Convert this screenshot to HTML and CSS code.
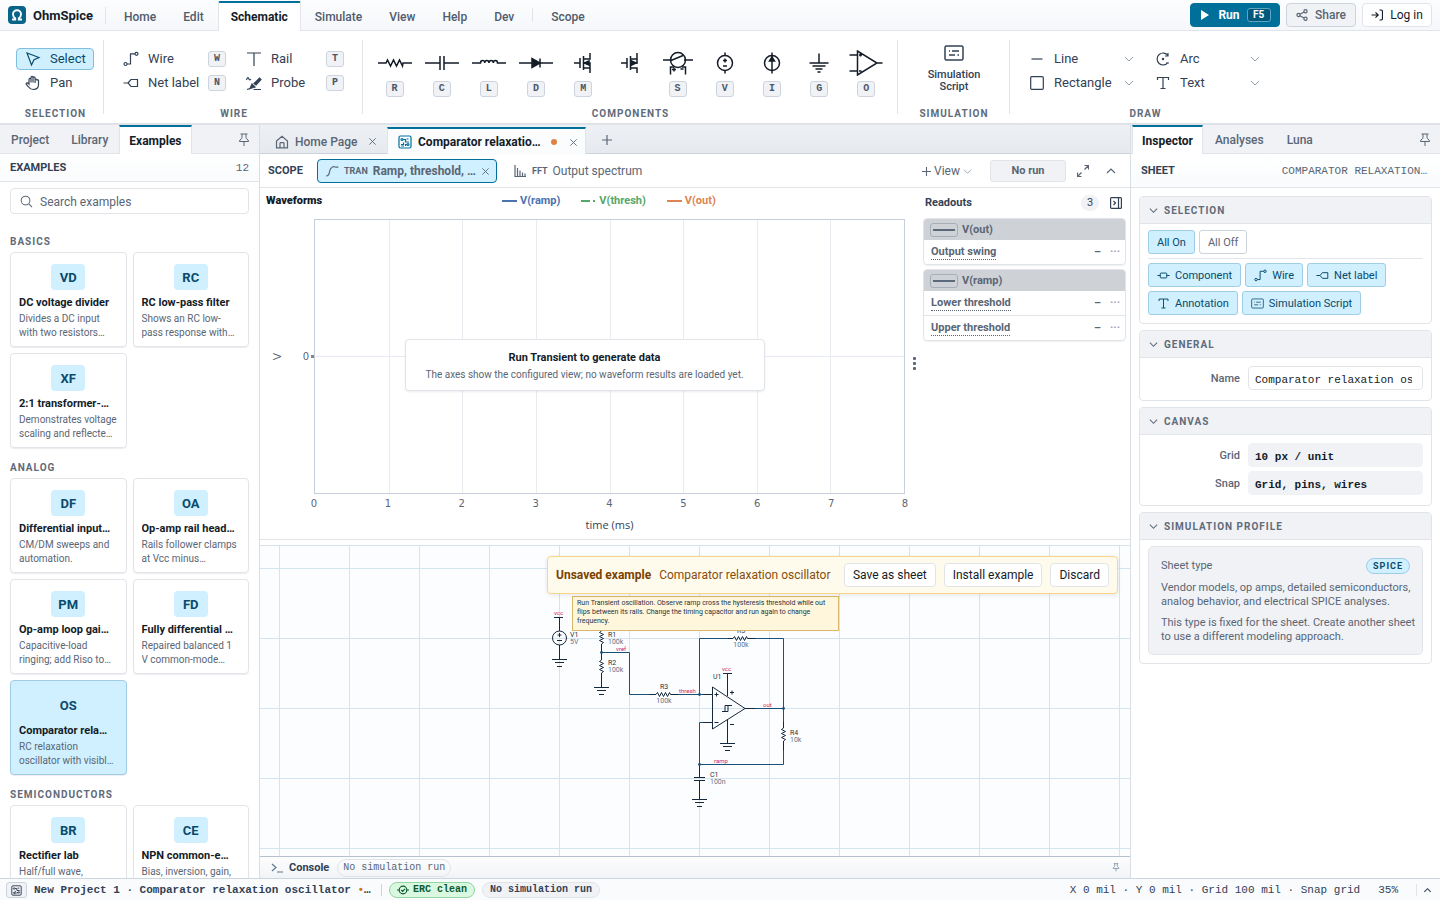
FILE: index.html
```html
<!DOCTYPE html>
<html lang="en">
<head>
<meta charset="utf-8">
<title>OhmSpice</title>
<link rel="stylesheet" href="styles.css">
</head>
<body>
<svg class="defs" aria-hidden="true">
  <symbol id="chev" viewBox="0 0 10 10"><path d="M1 3l4 4 4-4"/></symbol>
  <symbol id="close" viewBox="0 0 10 10"><path d="M1.500 1.500l7 7M8.500 1.500l-7 7"/></symbol>
  <symbol id="pin" viewBox="0 0 12 14"><path d="M2.500 1h7M4 1v3.500q0 1-1 1.500-1.500.8-1.500 2.500h9Q10.500 6.800 9 6 8 5.500 8 4.500V1M6 8.500V13"/></symbol>
  <symbol id="wire" viewBox="0 0 16 16"><circle cx="2.500" cy="13" r="1.500"/><circle cx="13.500" cy="2.800" r="1.500"/><path d="M4 13h3.500V2.800H12"/></symbol>
  <symbol id="netlabel" viewBox="0 0 16 16"><path d="M0.500 8H5M5 8l3-3.500h6.500v7H8z"/></symbol>
  <symbol id="serif-t" viewBox="0 0 16 16"><path d="M2.500 5V2.500h11V5M8 2.500v11M5.500 13.500h5"/></symbol>
  <symbol id="script" viewBox="0 0 20 16"><rect x="1" y="1" width="18" height="14" rx="1.500"/><path d="M5 6h1M8 6h7M5 10h6M13.500 10h1.500"/></symbol>
  <symbol id="sheet" viewBox="0 0 14 14"><rect x="1" y="1" width="12" height="12" rx="1.500"/><circle cx="4" cy="4.500" r="1"/><circle cx="10" cy="9.500" r="1"/><path d="M5 4.500h2.500V7H11M3 9.500h2.500V7.500M8.500 4h2M3 11h3M9 9.500H7.500V11"/></symbol>
</svg>

<header class="topbar">
  <svg class="logo" viewBox="0 0 18 18"><rect width="18" height="18" rx="4" fill="#086489"/><path d="M4 13.500h3.200v-1.200C5.600 11.300 5 9.800 5 8.200 5 5.900 6.700 4.300 9 4.300s4 1.600 4 3.900c0 1.600-.6 3.100-2.200 4.100v1.200H14" fill="none" stroke="#fff" stroke-width="1.900"/></svg>
  <strong class="brand">OhmSpice</strong>
  <nav class="menu">
    <button>Home</button><button>Edit</button><button class="on">Schematic</button><button>Simulate</button><button>View</button><button>Help</button><button>Dev</button><i class="vsep"></i><button>Scope</button>
  </nav>
  <div class="actions">
    <button class="btn run"><svg viewBox="0 0 10 12"><path d="M1 1l8 5-8 5z" fill="currentColor"/></svg>Run<kbd>F5</kbd></button>
    <button class="btn share"><svg viewBox="0 0 12 12"><circle cx="9.500" cy="2.300" r="1.600"/><circle cx="2.500" cy="6" r="1.600"/><circle cx="9.500" cy="9.700" r="1.600"/><path d="M4 5.200L8 3M4 6.800L8 9"/></svg>Share</button>
    <button class="btn login"><svg viewBox="0 0 12 12"><path d="M0.500 6H7M4.500 3.300L7.200 6 4.500 8.700M8.500 1h1.500q1.500 0 1.500 1.500v7q0 1.500-1.500 1.500H8.500"/></svg>Log in</button>
  </div>
</header>

<section class="ribbon">
  <div class="group g-select">
    <div class="tools one">
      <button class="tool on"><svg class="i16" viewBox="0 0 16 16"><path d="M2 2l12 4.500-5 2.200L6.500 14z"/></svg>Select</button>
      <button class="tool"><svg class="i16" viewBox="0 0 16 16"><path d="M4 9V4.500q0-1.200 1-1.200t1 1.200V7.500 2.500q0-1.200 1-1.200t1 1.200v5V3q0-1.200 1-1.200t1.100 1.200v5V5q0-1 1-1t1 1v0q.9-.5 1.400.5V9.500q0 5-5.300 5-3 0-4.500-2.500L1.300 9.500q-.5-1.200.7-1.600Q3 7.800 4 9z"/></svg>Pan</button>
    </div>
    <h2>Selection</h2>
  </div>
  <div class="group g-wire">
    <div class="tools two">
      <button class="tool"><svg class="i16"><use href="#wire"/></svg>Wire<kbd>W</kbd></button>
      <button class="tool"><svg class="i16" viewBox="0 0 16 16"><path d="M1 2h14M8 2v13"/></svg>Rail<kbd>T</kbd></button>
      <button class="tool"><svg class="i16"><use href="#netlabel"/></svg>Net label<kbd>N</kbd></button>
      <button class="tool"><svg class="i16" viewBox="0 0 16 16"><path d="M.5 5q1.200-4 2.200-1.500T5 4M1 14.500l3-1M7.500 14.500H15"/><path d="M4 13.500l2-4.500 3 3zM8 8.500L13.500 3l1.500 1.500-5 5.500z" fill="currentColor"/></svg>Probe<kbd>P</kbd></button>
    </div>
    <h2>Wire</h2>
  </div>
  <div class="group g-comp">
    <div class="parts">
      <button class="part" aria-label="Resistor"><svg viewBox="0 0 34 26"><path d="M0 13h8l1.500-3 3 6 3-6 3 6 3-6 3 6L25 13h9"/></svg><kbd>R</kbd></button>
      <button class="part" aria-label="Capacitor"><svg viewBox="0 0 34 26"><path d="M0 13h15M19 13h15M15 6v14M19 6v14"/></svg><kbd>C</kbd></button>
      <button class="part" aria-label="Inductor"><svg viewBox="0 0 34 26"><path d="M0 13h8.500q0-2.500 2.100-2.500T12.700 13q0-2.500 2.150-2.500T17 13q0-2.500 2.150-2.500T21.300 13q0-2.500 2.100-2.500T25.500 13H34"/></svg><kbd>L</kbd></button>
      <button class="part" aria-label="Diode"><svg viewBox="0 0 34 26"><path d="M0 13h34M21 8.500v9"/><path d="M13 8.500v9l8-4.500z" fill="currentColor"/></svg><kbd>D</kbd></button>
      <button class="part" aria-label="NMOS"><svg viewBox="0 0 34 26"><path d="M8 13h6M14 8v10M17.500 6v14M17.500 9H24V3M17.500 13H24v10M17.500 18H24"/><path d="M18.500 13l4.500-2v4z" fill="currentColor"/></svg><kbd>M</kbd></button>
      <button class="part" aria-label="PMOS"><svg viewBox="0 0 34 26"><path d="M8 13h6M14 8v10M17.500 6v14M17.500 9H24M24 3v10h-6.500M17.500 18H24v5"/><path d="M23 13l-4.500-2v4z" fill="currentColor"/></svg></button>
      <button class="part" aria-label="Switch"><svg viewBox="0 0 34 26"><circle cx="17" cy="10" r="7.500"/><path d="M2 10h9M23 10h9M10 10.500l12-5M9.500 24.500V17h3.500M24.500 24.500V17H21M13 17.500v4M11 19.500h4M19.500 19h3"/></svg><kbd>S</kbd></button>
      <button class="part" aria-label="Voltage source"><svg viewBox="0 0 34 26"><circle cx="17" cy="13" r="7.500"/><path d="M17 2.500v3M17 20.500v3M17 8.500v4M15 10.500h4M15 16h4"/></svg><kbd>V</kbd></button>
      <button class="part" aria-label="Current source"><svg viewBox="0 0 34 26"><circle cx="17" cy="13" r="7.500"/><path d="M17 2.500v21"/><path d="M14.500 11L17 7l2.500 4z" fill="currentColor"/></svg><kbd>I</kbd></button>
      <button class="part" aria-label="Ground"><svg viewBox="0 0 34 26"><path d="M17 3.500V13M7.500 13h19M10.500 16h13M13.500 19h7M15.500 22h3"/></svg><kbd>G</kbd></button>
      <button class="part" aria-label="Op amp"><svg viewBox="0 0 34 26"><path d="M8.500 1v24L28 13zM0.500 5h8M0.500 21h8M28 13h5.500M10 5h3M11.500 3.500v3M10 21h2.500"/></svg><kbd>O</kbd></button>
    </div>
    <h2>Components</h2>
  </div>
  <div class="group g-sim">
    <button class="big"><svg viewBox="0 0 20 16"><use href="#script"/></svg>Simulation<br>Script</button>
    <h2>Simulation</h2>
  </div>
  <div class="group g-draw">
    <div class="tools two">
      <button class="tool"><svg class="i16" viewBox="0 0 16 16"><path d="M2.500 8h11"/></svg>Line<svg class="dd"><use href="#chev"/></svg></button>
      <button class="tool"><svg class="i16" viewBox="0 0 16 16"><path d="M13 4.500A6 6 0 1 0 13 11.500M13 2v3h-3M11 12h3"/><circle cx="8" cy="8" r=".6"/></svg>Arc<svg class="dd"><use href="#chev"/></svg></button>
      <button class="tool"><svg class="i16" viewBox="0 0 16 16"><rect x="1.700" y="1.700" width="12.600" height="12.600" rx="1"/></svg>Rectangle<svg class="dd"><use href="#chev"/></svg></button>
      <button class="tool"><svg class="i16"><use href="#serif-t"/></svg>Text<svg class="dd"><use href="#chev"/></svg></button>
    </div>
    <h2>Draw</h2>
  </div>
</section>

<main class="work">
  <aside class="left">
    <div class="ptabs"><button>Project</button><button>Library</button><button class="on">Examples</button><svg class="pin"><use href="#pin"/></svg></div>
    <div class="phead short"><h1>EXAMPLES</h1><span>12</span></div>
    <div class="scroll">
      <label class="search"><svg viewBox="0 0 14 14"><circle cx="6" cy="6" r="4.700"/><path d="M9.500 9.500L13 13"/></svg><input type="text" placeholder="Search examples" aria-label="Search examples"></label>
      <h3>BASICS</h3>
      <div class="cards">
        <button class="card"><b>VD</b><strong>DC voltage divider</strong><span>Divides a DC input<br>with two resistors…</span></button>
        <button class="card"><b>RC</b><strong>RC low-pass filter</strong><span>Shows an RC low-<br>pass response with…</span></button>
        <button class="card"><b>XF</b><strong>2:1 transformer-…</strong><span>Demonstrates voltage<br>scaling and reflecte…</span></button>
      </div>
      <h3>ANALOG</h3>
      <div class="cards">
        <button class="card"><b>DF</b><strong>Differential input…</strong><span>CM/DM sweeps and<br>automation.</span></button>
        <button class="card"><b>OA</b><strong>Op-amp rail head…</strong><span>Rails follower clamps<br>at Vcc minus…</span></button>
        <button class="card"><b>PM</b><strong>Op-amp loop gai…</strong><span>Capacitive-load<br>ringing; add Riso to…</span></button>
        <button class="card"><b>FD</b><strong>Fully differential …</strong><span>Repaired balanced 1<br>V common-mode…</span></button>
        <button class="card on"><b>OS</b><strong>Comparator rela…</strong><span>RC relaxation<br>oscillator with visibl…</span></button>
      </div>
      <h3>SEMICONDUCTORS</h3>
      <div class="cards">
        <button class="card"><b>BR</b><strong>Rectifier lab</strong><span>Half/full wave,</span></button>
        <button class="card"><b>CE</b><strong>NPN common-e…</strong><span>Bias, inversion, gain,</span></button>
      </div>
    </div>
  </aside>

  <section class="center">
    <div class="doctabs">
      <button class="doc"><svg class="i14" viewBox="0 0 14 14"><path d="M1.500 6L7 1.200 12.500 6v6.800h-11zM5 12.800V8.500q0-.8.800-.8h2.400q.8 0 .8.800v4.300"/></svg><span>Home Page</span><svg class="x"><use href="#close"/></svg></button>
      <button class="doc on"><svg class="i14 accent"><use href="#sheet"/></svg><span>Comparator relaxatio…</span><i class="dot"></i><svg class="x"><use href="#close"/></svg></button>
      <button class="plus" aria-label="New tab"><svg viewBox="0 0 10 10"><path d="M5 0v10M0 5h10"/></svg></button>
    </div>
    <div class="scopebar">
      <h1>SCOPE</h1>
      <button class="view on"><svg class="i14" viewBox="0 0 14 14"><path d="M1 12q3 0 3.500-4T8.500 2.500q1.500 1 5 .5"/></svg><small>TRAN</small>Ramp, threshold, …<svg class="x"><use href="#close"/></svg></button>
      <button class="view"><svg class="i14" viewBox="0 0 14 14"><path d="M2 1v11.500h11M4.500 4v8M7 6.500V12M9.500 8.500V12M12 9.500V12"/></svg><small>FFT</small>Output spectrum</button>
      <button class="addview"><svg viewBox="0 0 10 10"><path d="M5 0v10M0 5h10"/></svg>View<svg class="dd"><use href="#chev"/></svg></button>
      <button class="norun">No run</button>
      <button class="ico" aria-label="Expand"><svg viewBox="0 0 12 12"><path d="M7.500 4.500l4-4M7.500.5h4v4M4.500 7.500l-4 4M.5 7.500v4h4"/></svg></button>
      <button class="ico" aria-label="Collapse"><svg viewBox="0 0 12 12"><path d="M2 8l4-4 4 4"/></svg></button>
    </div>
    <div class="scope">
      <div class="chart">
        <div class="legend"><strong>Waveforms</strong><div><span class="c1"><i></i>V(ramp)</span><span class="c2"><i></i>V(thresh)</span><span class="c3"><i></i>V(out)</span></div></div>
        <div class="plotrow">
          <div class="yname"><span>V</span></div><div class="ytick">0<i></i></div>
          <div class="plot">
            <i></i><i></i><i></i><i></i><i></i><i></i><i></i><i></i>
            <div class="empty"><strong>Run Transient to generate data</strong><span>The axes show the configured view; no waveform results are loaded yet.</span></div>
          </div>
        </div>
        <div class="xticks"><span>0</span><span>1</span><span>2</span><span>3</span><span>4</span><span>5</span><span>6</span><span>7</span><span>8</span></div>
        <div class="xname">time (ms)</div>
      </div>
      <div class="grip"><i></i><i></i><i></i></div>
      <div class="readouts">
        <div class="rhead"><h2>Readouts</h2><span>3</span><svg viewBox="0 0 12 12"><rect x=".6" y=".6" width="10.800" height="10.800" rx="1"/><path d="M8.500 1v10M3.500 4l2 2-2 2"/></svg></div>
        <div class="rcard"><h3><i></i>V(out)</h3><div class="row"><a href="#">Output swing</a><b>–</b><em>···</em></div></div>
        <div class="rcard"><h3><i></i>V(ramp)</h3><div class="row"><a href="#">Lower threshold</a><b>–</b><em>···</em></div><div class="row"><a href="#">Upper threshold</a><b>–</b><em>···</em></div></div>
      </div>
    </div>
    <div class="canvas">
      <svg class="schem">
        <defs><pattern id="grid" width="70" height="70" patternUnits="userSpaceOnUse" x="19" y="22"><path d="M0 .5h70M.5 0v70" stroke="#d3e5f0" stroke-width="1" fill="none"/></pattern></defs>
        <rect width="100%" height="100%" fill="url(#grid)" stroke="none"/>
        <g transform="translate(-260 -546)">
          <g class="net">
            <path d="M601.500 652.500H629.500V694.500H652M676 694.500H712M699.500 694.500V638.500H730M752 638.500H783.500V727M745 708.500H783.500M783.500 744V764.500H699.500V722.500H712"/>
          </g>
          <g class="dev">
            <path d="M554 617.500h9M559.500 617.500V631"/><circle cx="559.500" cy="638" r="7"/><path d="M559.500 633v4M557.500 635h4M557 640.500h5M559.500 645v7"/>
            <path d="M601.500 625v6l-2 1.500 4 2-4 2 4 2-4 2 4 2-2 1.500V660l-2 1.500 4 2-4 2 4 2-4 2 4 2-2 1.500v7"/>
            <path d="M650 694.500h6l1.500-2 2 4 2-4 2 4 2-4 2 4 2-4 1 2h8"/>
            <path d="M728 638.500h5l1.500-2 2 4 2-4 2 4 2-4 2 4 2-4 1 2h8"/>
            <path d="M783.500 722v6l-2 1.500 4 2-4 2 4 2-4 2 4 2-2 1.500V750"/>
            <path d="M712.500 687v42L745 708.500zM703 694.500h9M703 722.500h9M745 708.500h10M714.500 694.500h4M716.500 692.500v4M714.500 722.500h4M723 673.500h9M727.500 673.500V696M727.500 719v17M730 692.500h4M732 690.500v4M730 724.500h4M722 711.500h6v-6h4M725 711.500v-6h4"/>
            <path d="M699.500 764v13M694 777.500h11M694 780.500h11M699.500 780v13"/>
          </g>
          <g class="dev"><path d="M552 659.500h15M555 662.500h9M557 666.500h5M559.500 650v10M594 687.500h15M597 690.500h9M599 694.500h5M601.500 679v9M720 743.500h15M723 746.500h9M725 750.500h5M727.500 735v9M692 799.500h15M695 802.500h9M697 806.500h5M699.500 793v7"/></g>
          <g class="node"><circle cx="601.500" cy="652.500" r="1.400"/><circle cx="699.500" cy="694.500" r="1.400"/><circle cx="783.500" cy="708.500" r="1.400"/><circle cx="699.500" cy="764.500" r="1.400"/></g>
          <g class="lab">
            <text x="570" y="637">V1</text><text x="608" y="637">R1</text><text x="608" y="665">R2</text><text x="664" y="689" text-anchor="middle">R3</text><text x="741" y="633" text-anchor="middle">R5</text><text x="713" y="679">U1</text><text x="790" y="735">R4</text><text x="710" y="777">C1</text>
          </g>
          <g class="val">
            <text x="570" y="644">5V</text><text x="608" y="644">100k</text><text x="608" y="672">100k</text><text x="664" y="703" text-anchor="middle">100k</text><text x="741" y="647" text-anchor="middle">100k</text><text x="790" y="742">10k</text><text x="710" y="784">100n</text>
          </g>
          <g class="netname"><text x="554" y="615">vcc</text><text x="616" y="651">vref</text><text x="679" y="693">thresh</text><text x="722" y="671">vcc</text><text x="763" y="707">out</text><text x="714" y="763">ramp</text></g>
          <rect x="572.500" y="596.500" width="266" height="34" fill="#fff6dc" stroke="#d9b968"/>
          <g class="note"><text x="577" y="605">Run Transient oscillation. Observe ramp cross the hysteresis threshold while out</text><text x="577" y="614">flips between its rails. Change the timing capacitor and run again to change</text><text x="577" y="623">frequency.</text></g>
        </g>
      </svg>
      <div class="banner"><strong>Unsaved example</strong><span>Comparator relaxation oscillator</span><button>Save as sheet</button><button>Install example</button><button>Discard</button></div>
    </div>
    <div class="console"><svg viewBox="0 0 12 10"><path d="M1 1l4 3.500L1 8M6 9h6"/></svg><strong>Console</strong><span class="pill">No simulation run</span><svg class="pin sm"><use href="#pin"/></svg></div>
  </section>

  <aside class="right">
    <div class="ptabs"><button class="on">Inspector</button><button>Analyses</button><button>Luna</button><svg class="pin"><use href="#pin"/></svg></div>
    <div class="phead"><h1>SHEET</h1><span class="mono">COMPARATOR RELAXATION…</span></div>
    <div class="props">
      <section class="box"><h2><svg><use href="#chev"/></svg>SELECTION</h2>
        <div class="body sel">
          <div class="chips top"><button class="chip">All On</button><button class="chip off">All Off</button></div>
          <div class="chips">
            <button class="chip"><svg viewBox="0 0 16 16"><rect x="4" y="5" width="8" height="6" rx="1"/><path d="M.5 8H4M12 8h3.500"/></svg>Component</button>
            <button class="chip"><svg><use href="#wire"/></svg>Wire</button>
            <button class="chip"><svg><use href="#netlabel"/></svg>Net label</button>
            <button class="chip"><svg><use href="#serif-t"/></svg>Annotation</button>
            <button class="chip"><svg><use href="#script"/></svg>Simulation Script</button>
          </div>
        </div>
      </section>
      <section class="box"><h2><svg><use href="#chev"/></svg>GENERAL</h2>
        <div class="body"><div class="field"><label for="name">Name</label><input id="name" type="text" value="Comparator relaxation oscillator"></div></div>
      </section>
      <section class="box"><h2><svg><use href="#chev"/></svg>CANVAS</h2>
        <div class="body"><div class="field"><span>Grid</span><output>10 px / unit</output></div><div class="field"><span>Snap</span><output>Grid, pins, wires</output></div></div>
      </section>
      <section class="box"><h2><svg><use href="#chev"/></svg>SIMULATION PROFILE</h2>
        <div class="body prof"><div class="sheetcard"><div class="st"><span>Sheet type</span><b>SPICE</b></div>
          <p>Vendor models, op amps, detailed semiconductors, analog behavior, and electrical SPICE analyses.</p><p>This type is fixed for the sheet. Create another sheet to use a different modeling approach.</p></div></div>
      </section>
    </div>
  </aside>
</main>

<footer class="status">
  <button class="sbtn" aria-label="Sheet"><svg><use href="#sheet"/></svg></button>
  <strong>New Project 1 · Comparator relaxation oscillator <i>•</i>…</strong>
  <span class="tag ok"><svg viewBox="0 0 12 12"><circle cx="6" cy="6" r="3.800"/><path d="M0 6h2M10 6h2M4.300 6l1.300 1.300L8 4.900"/></svg>ERC clean</span>
  <span class="tag">No simulation run</span>
  <span class="coords">X 0 mil · Y 0 mil · Grid 100 mil · Snap grid</span><span>35%</span>
  <button class="up" aria-label="More"><svg viewBox="0 0 10 10"><path d="M1.500 7L5 3.500 8.500 7"/></svg></button>
</footer>
</body>
</html>
```
FILE: styles.css
```css
* { box-sizing: border-box; }
:root {
  --ink: #141c28; --mid: #334155; --mute: #5a6675; --line: #e1e5ea; --line2: #ccd3dc;
  --gray: #f0f2f6; --accent: #00709b; --sky: #d0f0ff; --skyline: #9fcde6; --deep: #0a4a6b;
  --mono: "Liberation Mono", monospace;
}
body { margin: 0; height: 100vh; overflow: hidden; display: flex; flex-direction: column; font: 12px/16px Roboto, sans-serif; color: var(--mid); background: #fff; }
button { font: inherit; color: inherit; background: none; border: 0; padding: 0; display: flex; align-items: center; white-space: nowrap; }
h1, h2, h3, p { margin: 0; font-size: inherit; }
svg { fill: none; stroke: currentColor; stroke-width: 1.2; flex: none; }
.defs { display: none; }
kbd { font: bold 10px/14px var(--mono); color: #4b5768; background: var(--gray); border: 1px solid #cdd4de; border-radius: 3px; width: 18px; height: 16px; text-align: center; }

.topbar { flex: none; height: 31px; display: flex; align-items: center; padding: 0 8px; border-bottom: 1px solid var(--line); background: linear-gradient(#fcfdfe, #f5f7fa); }
.logo { width: 18px; height: 18px; stroke: none; }
.brand { font-size: 13px; color: var(--ink); margin-left: 7px; padding-top: 1px; width: 73px; border-right: 1px solid var(--line); }
.menu { display: flex; gap: 1px; align-self: stretch; align-items: stretch; margin: 1px 0 -1px 5px; }
.menu button { padding: 2px 13px 0; color: #505c6c; font-weight: 500; }
.menu .on { color: var(--ink); font-weight: bold; background: #fff; border: 1px solid var(--line); border-top: 2px solid var(--accent); border-bottom: 0; border-radius: 2px 2px 0 0; padding: 0 12px; }
.vsep { width: 1px; margin: 7px 4px 9px; background: var(--line); }
.actions { margin-left: auto; display: flex; gap: 6px; }
.btn { height: 24px; border: 1px solid var(--line2); border-radius: 4px; justify-content: center; gap: 7px; width: 70px; }
.btn svg { width: 12px; height: 12px; }
.run { width: 90px; background: var(--accent); border-color: var(--accent); color: #fff; font-weight: bold; }
.run svg { stroke: none; }
.run kbd { font: bold 10px/12px Roboto, sans-serif; color: #fff; background: #00587c; border-color: #5fa5c1; width: 24px; height: 14px; }
.share { background: var(--gray); color: var(--mute); font-weight: 500; }
.login { background: #fff; color: var(--ink); border-color: var(--line); }

.ribbon { flex: none; height: 94px; display: flex; border-bottom: 2px solid #dfe3e8; }
.group { position: relative; display: flex; flex-direction: column; padding-top: 17px; }
.group:not(:last-child)::after { content: ""; position: absolute; right: 0; top: 9px; bottom: 9px; width: 1px; background: var(--line); }
.group h2 { margin-top: auto; padding-bottom: 1px; text-align: center; font-size: 10px; line-height: 16px; color: #5f6b7a; letter-spacing: 1px; text-transform: uppercase; }
.g-select { width: 104px; padding-left: 16px; padding-right: 9px; }
.g-wire { width: 259px; padding-left: 19px; padding-right: 18px; }
.g-comp { width: 535px; padding-left: 8px; padding-right: 8px; }
.g-sim { width: 112px; align-items: center; padding-top: 14px; }
.g-draw { width: 270px; padding-left: 15px; padding-right: 14px; }
.tools { display: grid; row-gap: 2px; }
.tools.two { grid-template-columns: 1fr 1fr; }
.g-wire .two { grid-template-columns: 103px 98px; column-gap: 20px; }
.g-draw .two { grid-template-columns: 109px 109px; column-gap: 17px; }
.tool { height: 22px; gap: 9px; font-size: 13px; }
.tool kbd, .tool .dd { margin-left: auto; }
.g-select .tool { width: 78px; padding-left: 8px; border: 1px solid transparent; border-radius: 4px; }
.g-select .on { background: var(--sky); border-color: #7fbfdf; color: var(--deep); }
.i16 { width: 16px; height: 16px; }
.g-draw .i16 { margin-left: 4px; }
.dd { width: 10px; height: 10px; color: #94a0af; stroke-width: 1; }
.parts { display: flex; justify-content: space-between; align-items: flex-start; padding-top: 2px; }
.part { width: 47px; flex-direction: column; gap: 5px; color: var(--ink); }
.part svg { width: 34px; height: 26px; stroke-width: 1.5; }
.big { display: block; text-align: center; font-size: 11px; line-height: 12px; font-weight: 500; }
.big svg { display: block; width: 20px; height: 16px; margin: 0 auto 8px; stroke-width: 1.5; }

.work { flex: 1; min-height: 0; display: grid; grid-template-columns: 260px minmax(0, 1fr) 309px; }
.left, .center { border-right: 1px solid #d9dee5; min-height: 0; display: flex; flex-direction: column; }
.left { overflow: hidden; }
.ptabs { flex: none; height: 29px; display: flex; background: var(--gray); border-bottom: 1px solid var(--line); }
.ptabs button { padding: 1px 11px 0; margin-bottom: -1px; font-weight: 500; color: var(--mute); }
.ptabs .on { background: #fff; color: var(--ink); font-weight: bold; border: 1px solid var(--line); border-top: 2px solid var(--accent); border-bottom: 0; padding: 0 9px; }
.right .ptabs .on { margin-left: 1px; }
.pin { width: 12px; height: 14px; margin: 8px 9px 0 auto; color: var(--mute); stroke-width: 1; }
.phead { flex: none; height: 34px; display: flex; align-items: center; justify-content: space-between; padding: 1px 13px 0 10px; border-bottom: 1px solid var(--line); background: linear-gradient(#fff, #f9fbfc); }
.phead h1 { font-size: 11px; }
.phead span { color: var(--mute); font: 11px/16px var(--mono); }
.phead.short { height: 28px; padding-right: 10px; }
.scroll { padding: 6px 10px 0; flex: 1; overflow: hidden; }
.search { display: flex; align-items: center; height: 26px; border: 1px solid var(--line); border-radius: 4px; padding: 1px 0 0 9px; gap: 7px; margin-bottom: 20px; }
.search svg { width: 13px; height: 13px; color: var(--mute); stroke-width: 1.1; }
.search input { border: 0; outline: 0; min-width: 0; flex: 1; padding: 0; background: none; font: 12px/16px Roboto, sans-serif; }
input::placeholder { color: var(--mute); }
.scroll h3 { font-size: 10px; line-height: 16px; letter-spacing: 1px; color: #5f6b7a; margin-bottom: 2px; }
.cards { display: grid; grid-template-columns: 1fr 1fr; gap: 6px; margin-bottom: 12px; }
.card { display: flex; flex-direction: column; align-items: stretch; text-align: left; min-width: 0; height: 95px; border: 1px solid var(--line); border-radius: 4px; padding: 11px 8px 0; box-shadow: 0 1px 1px #0f172a14; }
.card b { align-self: center; width: 34px; height: 26px; border-radius: 4px; background: var(--sky); color: var(--deep); font-size: 13px; line-height: 27px; text-align: center; }
.card strong { font-size: 11px; line-height: 16px; color: var(--ink); margin: 5px 0 1px; overflow: hidden; }
.card span { font-size: 10px; line-height: 14px; color: var(--mute); overflow: hidden; }
.card.on { background: var(--sky); border-color: var(--skyline); }

.doctabs { flex: none; height: 29px; display: flex; background: linear-gradient(#edf0f4, #e6eaef); border-bottom: 1px solid var(--line2); }
.doc { padding: 5px 10px 0 15px; width: 127px; gap: 6px; color: var(--mute); font-weight: 500; }
.doc.on { width: 199px; margin: 2px 0 -1px; padding: 1px 7px 0 10px; background: #fafcfe; border: 1px solid var(--line); border-top: 2px solid var(--accent); border-bottom: 0; color: var(--ink); font-weight: bold; }
.i14 { width: 14px; height: 14px; }
.accent { color: var(--accent); }
.x { width: 9px; height: 9px; margin-left: auto; stroke-width: 1; color: var(--mute); }
.dot { width: 6px; height: 6px; border-radius: 50%; background: #dd8240; margin-left: auto; }
.dot + .x { margin-left: 6px; }
.plus { padding: 2px 16px 0; color: var(--mute); }
.plus svg { width: 10px; height: 10px; }
.scopebar { flex: none; height: 34px; display: flex; align-items: center; border-bottom: 1px solid var(--line); padding: 1px 13px 0 8px; color: var(--mute); }
.scopebar h1 { font-size: 11px; color: var(--mid); width: 49px; }
.view { height: 24px; padding: 0 7px; gap: 5px; width: 180px; border: 1px solid transparent; border-radius: 4px; }
.view.on { background: var(--sky); border-color: var(--accent); font-weight: bold; }
.view + .view { margin-left: 8px; }
.view small { font: bold 9px/12px Roboto, sans-serif; }
.view .x { margin-left: auto; }
.addview { margin-left: auto; gap: 3px; }
.addview svg { width: 9px; height: 9px; }
.norun { margin: 0 11px 0 18px; width: 76px; height: 22px; justify-content: center; background: var(--gray); border: 1px solid var(--line); border-radius: 3px; font-weight: bold; font-size: 11px; }
.ico { width: 12px; margin-right: 16px; }
.ico:last-child { margin-right: 0; }
.ico svg { width: 12px; height: 12px; }

.scope { flex: none; height: 352px; display: flex; border-bottom: 1px solid var(--line); }
.chart { flex: 1; min-width: 0; padding-left: 6px; display: flex; flex-direction: column; }
.legend { height: 31px; padding-top: 5px; display: flex; align-items: flex-start; font-size: 11px; line-height: 16px; font-weight: bold; color: var(--ink); }
.legend strong { width: 236px; }
.legend div { display: flex; gap: 21px; }
.legend span { display: flex; align-items: center; gap: 3px; }
.legend i { width: 15px; height: 2px; background: currentColor; }
.c1 { color: #4c72b0; } .c2 { color: #55a868; } .c3 { color: #dd8452; }
.legend .c2 i { background: linear-gradient(90deg, currentColor 0 9px, #fff 9px 12px, currentColor 12px 14px, #fff 14px); }
.plotrow { flex: 1; display: flex; align-items: center; }
.yname { width: 22px; display: flex; justify-content: center; font-family: "Liberation Sans", sans-serif; color: var(--mute); }
.yname span { writing-mode: vertical-rl; transform: rotate(180deg); font-size: 11px; line-height: 14px; }
.ytick { width: 26px; display: flex; align-items: center; justify-content: flex-end; gap: 2px; font: 10px/12px "DejaVu Sans", sans-serif; color: var(--mute); }
.ytick i { width: 3px; height: 3px; background: #7d8794; }
.plot { flex: 1; align-self: stretch; display: grid; grid-template-columns: repeat(8, 1fr); border: 1px solid #c7cfdd; position: relative; background: linear-gradient(#e6eaf2, #e6eaf2) 0 50% / 100% 1px no-repeat; }
.plot > i + i { border-left: 1px solid #e8ebf0; }
.empty { position: absolute; top: 50%; left: 50%; width: 360px; margin: -18px 0 0 -205px; height: 52px; border: 1px solid var(--line); border-radius: 4px; background: #fff; text-align: center; padding-top: 9px; box-shadow: 0 1px 2px #0f172a14; }
.empty strong, .empty span { display: block; line-height: 17px; white-space: nowrap; font-size: 11px; }
.empty strong { color: var(--ink); }
.empty span { color: var(--mute); font-size: 10px; }
.xticks { display: flex; justify-content: space-between; margin-left: 48px; height: 20px; font: 10px/20px "DejaVu Sans", sans-serif; color: var(--mute); }
.xticks span { width: 0; display: flex; justify-content: center; }
.xname { margin-left: 48px; text-align: center; height: 25px; padding-top: 3px; font: 11px/16px "Open Sans", sans-serif; }
.grip { width: 18px; display: flex; flex-direction: column; justify-content: center; align-items: center; gap: 2px; }
.grip i { width: 3px; height: 3px; border-radius: 1px; background: var(--mute); }
.readouts { width: 207px; padding-right: 4px; display: flex; flex-direction: column; gap: 4px; font-size: 11px; }
.rhead { height: 26px; padding: 3px 4px 0 2px; display: flex; align-items: center; gap: 11px; }
.rhead h2 { flex: 1; }
.rhead span { width: 18px; border-radius: 8px; background: var(--gray); text-align: center; }
.rhead svg { width: 12px; height: 12px; }
.rcard { border: 1px solid var(--line); border-radius: 4px; overflow: hidden; color: var(--mute); box-shadow: 0 1px 1px #0f172a0f; }
.rcard h3 { height: 21px; display: flex; align-items: center; gap: 4px; padding: 1px 0 0 6px; background: #ced2d7; }
.rcard h3 i { width: 28px; height: 14px; border: 1px solid #a6aeb7; border-radius: 3px; background: linear-gradient(#5b697b, #5b697b) center / 22px 2px no-repeat; }
.row { height: 24px; display: flex; align-items: center; gap: 9px; padding: 0 5px 0 7px; }
.row + .row { border-top: 1px solid var(--line); height: 25px; }
.row a { color: inherit; font-weight: bold; text-decoration: none; border-bottom: 1px dotted var(--mute); line-height: 14px; margin-right: auto; }
.row em { font-style: normal; font-weight: bold; color: #9aa4b1; }

.canvas { flex: 1; position: relative; min-height: 0; overflow: hidden; border-top: 1px solid #d6e0e8; margin-top: 5px; background: #fbfdff; }
.center { background: #fff; }
.schem { width: 100%; height: 100%; display: block; stroke-width: 1; }
.schem text { stroke: none; font-family: Roboto, sans-serif; font-size: 7px; }
.net { stroke: #1b5179; }
.dev { stroke: #16283c; }
.node { fill: #1b5179; stroke: none; }
.lab { fill: #263443; }
.val { fill: #64748b; }
.schem .netname text { font-size: 6px; }
.netname { fill: #cf2563; }
.note { fill: #263443; }
.banner { position: absolute; top: 10px; right: 12px; height: 38px; width: 571px; display: flex; align-items: center; gap: 8px; padding: 0 8px; background: #fffbec; border: 1px solid #fbd688; border-radius: 4px; color: #854d0e; box-shadow: 0 1px 4px #0f172a1a; }
.banner strong { color: #7a4100; }
.banner span { margin-right: auto; }
.banner button { height: 24px; padding: 0 8px; background: #fff; border: 1px solid var(--line); border-radius: 4px; color: var(--ink); }
.console { flex: none; height: 22px; display: flex; align-items: center; padding: 0 10px 0 11px; gap: 6px; border-top: 1px solid #b4c2d0; background: linear-gradient(#fdfdfe, #f1f4f7); font-size: 11px; }
.console svg { width: 12px; height: 10px; color: #5e7890; }
.pill { margin-left: 2px; font: 10px/16px var(--mono); border: 1px solid var(--line); border-radius: 9px; padding: 0 5px; color: var(--mute); }
.console .sm { width: 8px; height: 9px; margin: 0 0 0 auto; }

.right { min-width: 0; }
.right .ptabs button { padding-left: 12px; padding-right: 11px; }
.right .ptabs .on { padding-left: 9px; padding-right: 9px; }
.props { padding: 8px; display: flex; flex-direction: column; gap: 6px; }
.box { border: 1px solid var(--line); border-radius: 4px; overflow: hidden; }
.box h2 { height: 27px; display: flex; align-items: center; gap: 6px; padding: 1px 0 0 9px; background: var(--gray); border-bottom: 1px solid var(--line); font-size: 10px; letter-spacing: 1px; color: #5f6b7a; }
.box h2 svg { width: 9px; height: 9px; }
.body { padding: 8px 8px 10px; display: flex; flex-direction: column; gap: 4px; }
.body.sel { padding: 6px 8px 8px; }
.chips { display: flex; flex-wrap: wrap; gap: 4px; }
.chips.top { border-bottom: 1px solid var(--line); padding-bottom: 4px; }
.chip { height: 24px; padding: 1px 8px 0; gap: 5px; background: var(--sky); border: 1px solid var(--skyline); border-radius: 3px; color: var(--deep); font-size: 11px; }
.chip svg { width: 13px; height: 13px; }
.chip.off { background: #fff; border-color: var(--line2); color: var(--mute); }
.field { display: grid; grid-template-columns: 92px minmax(0, 1fr); gap: 8px; align-items: center; font-weight: 500; font-size: 11px; color: var(--mute); }
.field > :first-child { text-align: right; padding-top: 1px; }
.field input, .field output { width: 100%; height: 24px; border-radius: 4px; border: 1px solid var(--line); padding: 3px 10px 0 6px; font: 11px/20px var(--mono); color: var(--ink); background: #fff; }
.field output { background: var(--gray); border-color: var(--gray); font-weight: bold; }
.body.prof { padding: 6px 8px 8px; }
.sheetcard { background: var(--gray); border: 1px solid var(--line); border-radius: 5px; padding: 11px 5px 10px 12px; font-size: 11px; color: var(--mute); }
.st { display: flex; justify-content: space-between; align-items: center; margin-right: 7px; }
.st b { font-size: 9px; line-height: 14px; border: 1px solid var(--skyline); border-radius: 9px; background: var(--sky); color: var(--deep); padding: 0 6px; letter-spacing: 1px; }
.sheetcard p { margin-top: 7px; line-height: 14px; }

.status { flex: none; height: 22px; border-top: 1px solid #ccd6e0; display: flex; align-items: center; padding: 1px 8px 0 6px; background: #f9fbfc; font: 11px/16px var(--mono); white-space: nowrap; }
.sbtn { width: 21px; height: 16px; border: 1px solid var(--line2); border-radius: 3px; background: var(--gray); justify-content: center; margin-right: 7px; }
.sbtn svg { width: 11px; height: 11px; }
.status strong { width: 348px; border-right: 1px solid var(--line2); line-height: 12px; }
.status i { color: #c57a14; font-style: normal; }
.tag { margin-left: 7px; height: 16px; font-size: 10px; line-height: 14px; font-weight: bold; border: 1px solid var(--line); background: var(--gray); border-radius: 8px; padding: 0 7px; display: flex; align-items: center; gap: 4px; }
.tag svg { width: 12px; height: 12px; }
.tag.ok { color: #0b5a30; background: #daf7df; border-color: #92d6a2; }
.coords { margin: 0 18px 0 auto; }
.up { margin-left: 18px; padding-left: 6px; border-left: 1px solid var(--line); }
.up svg { width: 9px; height: 12px; }
```
